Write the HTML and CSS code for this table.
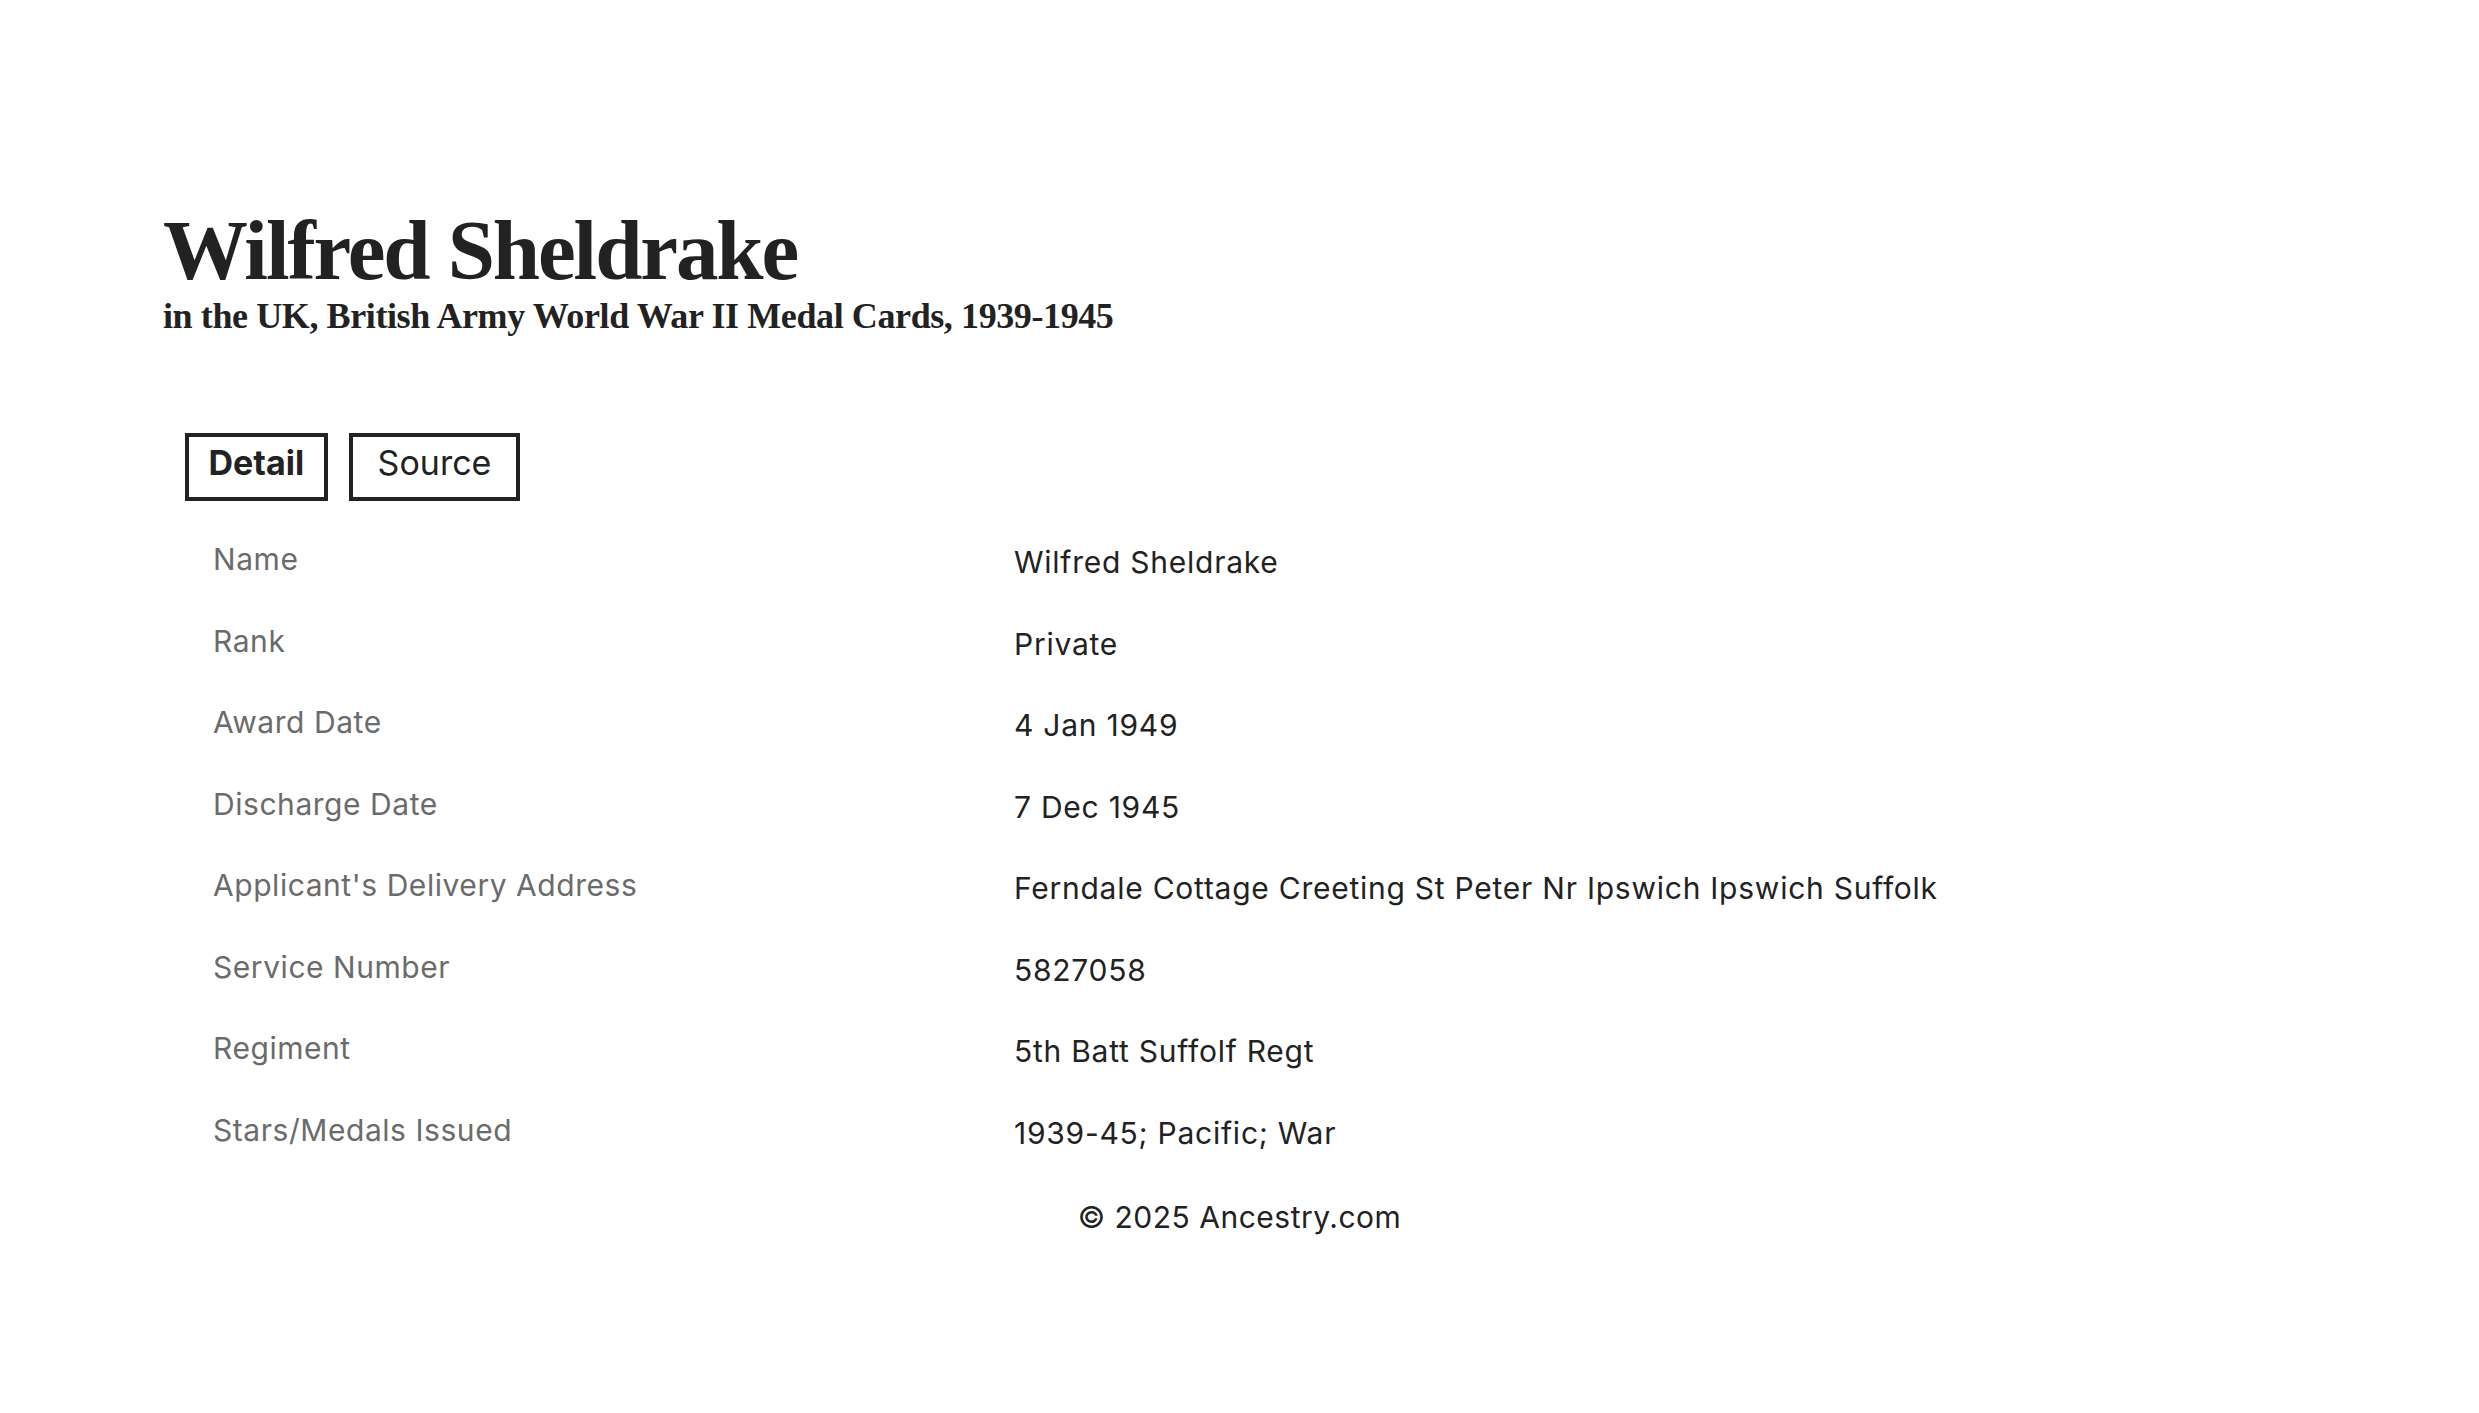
FILE: index.html
```html
<!DOCTYPE html>
<html lang="en">
<head>
  <meta charset="UTF-8">
  <meta name="viewport" content="width=device-width, initial-scale=1.0">
  <title>Wilfred Sheldrake - Ancestry</title>
  <link rel="stylesheet" href="styles.css">
</head>
<body>

<div class="page">
  <h1 class="title">Wilfred Sheldrake</h1>
  <p class="subtitle">in the UK, British Army World War II Medal Cards, 1939-1945</p>

  <div class="tabs">
    <button class="tab active">Detail</button>
    <button class="tab">Source</button>
  </div>

  <div class="details">
    <div class="row">
      <div class="label">Name</div>
      <div class="value">Wilfred Sheldrake</div>
    </div>
    <div class="row">
      <div class="label">Rank</div>
      <div class="value">Private</div>
    </div>
    <div class="row">
      <div class="label">Award Date</div>
      <div class="value">4 Jan 1949</div>
    </div>
    <div class="row">
      <div class="label">Discharge Date</div>
      <div class="value">7 Dec 1945</div>
    </div>
    <div class="row">
      <div class="label">Applicant's Delivery Address</div>
      <div class="value">Ferndale Cottage Creeting St Peter Nr Ipswich Ipswich Suffolk</div>
    </div>
    <div class="row">
      <div class="label">Service Number</div>
      <div class="value">5827058</div>
    </div>
    <div class="row">
      <div class="label">Regiment</div>
      <div class="value">5th Batt Suffolf Regt</div>
    </div>
    <div class="row">
      <div class="label">Stars/Medals Issued</div>
      <div class="value">1939-45; Pacific; War</div>
    </div>
  </div>
</div>

<footer class="footer">&copy; 2025 Ancestry.com</footer>

</body>
</html>
```

FILE: styles.css
```css
body {
  margin: 0;
  font-family: Inter, "Liberation Sans", Arial, sans-serif;
  color: #222;
  background-color: #fff;
}
.page {
  padding: 208px 0 0 163px;
}
.title {
  margin: 0;
  font-family: "Liberation Serif", "Times New Roman", serif;
  font-weight: bold;
  font-size: 85px;
  line-height: 1;
  letter-spacing: -2.1px;
}
.subtitle {
  margin: 5px 0 0;
  font-family: "Liberation Serif", "Times New Roman", serif;
  font-weight: bold;
  font-size: 36px;
  line-height: 1;
  letter-spacing: -0.4px;
}
.tabs {
  display: flex;
  gap: 21px;
  margin: 99px 0 0 22px;
}
.tab {
  font-family: inherit;
  font-size: 34px;
  line-height: 40px;
  color: #222;
  background: #fff;
  border: 4px solid #222;
  padding: 6px 25px 14px;
}
.tab.active {
  font-weight: bold;
  padding: 6px 19.5px 14px;
}
.details {
  margin: 20px 0 0 50px;
}
.row {
  display: grid;
  grid-template-columns: 801px 1fr;
  padding: 20px 0 25.5px;
  font-size: 30px;
  line-height: 36px;
}
.label {
  color: #6b6b6b;
  letter-spacing: 0.55px;
}
.value {
  padding-top: 3px;
  margin-bottom: -3px;
  color: #222;
  letter-spacing: 0.75px;
}
.footer {
  margin-top: 26px;
  text-align: center;
  font-size: 30px;
  line-height: 36px;
  letter-spacing: 0.5px;
}
```
